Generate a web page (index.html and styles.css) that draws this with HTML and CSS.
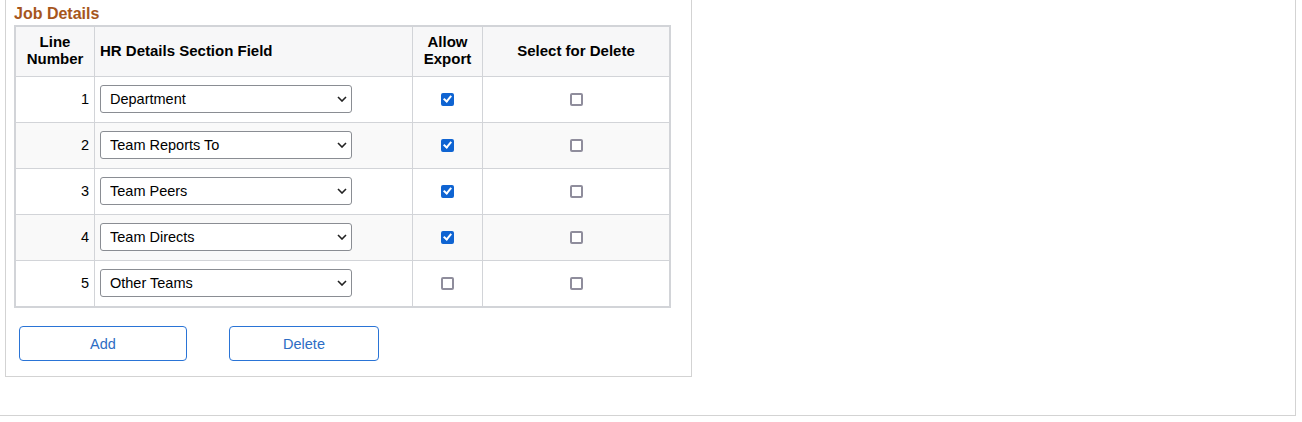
FILE: index.html
```html
<!DOCTYPE html>
<html>
<head>
<meta charset="utf-8">
<link rel="stylesheet" href="styles.css">
</head>
<body>
<div class="page">
  <div class="group">
    <div class="group-title">Job Details</div>
    <table class="grid">
      <thead>
        <tr>
          <th class="c-line">Line<br>Number</th>
          <th class="c-field">HR Details Section Field</th>
          <th class="c-export">Allow<br>Export</th>
          <th class="c-del">Select for Delete</th>
        </tr>
      </thead>
      <tbody>
        <tr>
          <td class="num">1</td>
          <td class="fld"><div class="sel"><select><option>Department</option></select><svg class="chev" width="10" height="6" viewBox="0 0 10 6"><path d="M1 1 L5 5 L9 1" fill="none" stroke="#222" stroke-width="1.6"/></svg></div></td>
          <td class="cb"><input type="checkbox" checked></td>
          <td class="cb"><input type="checkbox"></td>
        </tr>
        <tr class="alt">
          <td class="num">2</td>
          <td class="fld"><div class="sel"><select><option>Team Reports To</option></select><svg class="chev" width="10" height="6" viewBox="0 0 10 6"><path d="M1 1 L5 5 L9 1" fill="none" stroke="#222" stroke-width="1.6"/></svg></div></td>
          <td class="cb"><input type="checkbox" checked></td>
          <td class="cb"><input type="checkbox"></td>
        </tr>
        <tr>
          <td class="num">3</td>
          <td class="fld"><div class="sel"><select><option>Team Peers</option></select><svg class="chev" width="10" height="6" viewBox="0 0 10 6"><path d="M1 1 L5 5 L9 1" fill="none" stroke="#222" stroke-width="1.6"/></svg></div></td>
          <td class="cb"><input type="checkbox" checked></td>
          <td class="cb"><input type="checkbox"></td>
        </tr>
        <tr class="alt">
          <td class="num">4</td>
          <td class="fld"><div class="sel"><select><option>Team Directs</option></select><svg class="chev" width="10" height="6" viewBox="0 0 10 6"><path d="M1 1 L5 5 L9 1" fill="none" stroke="#222" stroke-width="1.6"/></svg></div></td>
          <td class="cb"><input type="checkbox" checked></td>
          <td class="cb"><input type="checkbox"></td>
        </tr>
        <tr>
          <td class="num">5</td>
          <td class="fld"><div class="sel"><select><option>Other Teams</option></select><svg class="chev" width="10" height="6" viewBox="0 0 10 6"><path d="M1 1 L5 5 L9 1" fill="none" stroke="#222" stroke-width="1.6"/></svg></div></td>
          <td class="cb"><input type="checkbox"></td>
          <td class="cb"><input type="checkbox"></td>
        </tr>
      </tbody>
    </table>
    <div class="actions">
      <button class="btn btn-add">Add</button>
      <button class="btn btn-del">Delete</button>
    </div>
  </div>
</div>
</body>
</html>
```

FILE: styles.css
```css
html, body {
  margin: 0;
  padding: 0;
  background: #fff;
}
body {
  font-family: Arial, "Liberation Sans", sans-serif;
  font-size: 14.5px;
  color: #000;
}
.page {
  width: 1295px;
  height: 415px;
  border-right: 1px solid #d3d3d3;
  border-bottom: 1px solid #d3d3d3;
}
.group {
  margin-left: 5px;
  width: 687px;
  height: 377px;
  border-left: 1px solid #d3d3d3;
  border-right: 1px solid #d3d3d3;
  border-bottom: 1px solid #d3d3d3;
  padding: 0 8px;
  box-sizing: border-box;
}
.group-title {
  padding-top: 4px;
  line-height: 20px;
  height: 20px;
  margin-bottom: 1px;
  font-size: 16px;
  font-weight: bold;
  color: #a6561c;
}
.grid {
  border-collapse: collapse;
  border: 2px solid #d2d4d8;
  width: 657px;
}
.grid th, .grid td {
  border: 1px solid #d2d4d8;
  padding: 0;
}
.grid th {
  background: #f7f7f8;
  font-size: 15px;
  font-weight: bold;
  line-height: 17px;
  height: 46px;
  padding-bottom: 3px;
  text-align: center;
}
.grid th.c-field {
  text-align: left;
  padding-left: 5px;
}
.c-line { width: 78px; }
.c-field { width: 312px; }
.c-export { width: 69px; }
.grid tbody td {
  height: 44px;
  padding-bottom: 1px;
  background: #fff;
}
.grid tbody tr.alt td {
  background: #f9f9f9;
}
.grid td.num {
  text-align: right;
  padding-right: 5px;
}
.grid td.fld {
  padding-left: 5px;
}
.sel {
  position: relative;
  width: 252px;
  height: 28px;
}
.sel select {
  appearance: none;
  -webkit-appearance: none;
  width: 252px;
  height: 28px;
  box-sizing: border-box;
  border: 1px solid #8a8d93;
  border-radius: 3px;
  background: #fff;
  font-family: Arial, "Liberation Sans", sans-serif;
  font-size: 14.5px;
  color: #000;
  padding: 0 0 0 9px;
  margin: 0;
  display: block;
}
.chev {
  position: absolute;
  right: 5px;
  top: 11px;
  pointer-events: none;
}
.grid td.cb {
  text-align: center;
  height: 42px;
  padding-bottom: 3px;
}
.cb input {
  appearance: none;
  -webkit-appearance: none;
  width: 13px;
  height: 13px;
  margin: 0;
  box-sizing: border-box;
  border: 2px solid #8f8d9c;
  border-radius: 2px;
  background: #fff;
  vertical-align: middle;
  position: relative;
  display: inline-block;
}
.cb input:checked {
  background: #0f64d2;
  border-color: #0f64d2;
}
.cb input:checked::after {
  content: "";
  position: absolute;
  left: 2px;
  top: -1px;
  width: 3px;
  height: 6px;
  border: solid #fff;
  border-width: 0 2px 2px 0;
  transform: rotate(40deg);
}
.actions {
  display: flex;
  gap: 42px;
  padding: 18px 0 0 5px;
}
.btn {
  height: 35px;
  box-sizing: border-box;
  border: 1px solid #2a74d6;
  border-radius: 4px;
  background: #fff;
  color: #2d6dc4;
  font-family: Arial, "Liberation Sans", sans-serif;
  font-size: 14.5px;
  padding: 0;
  margin: 0;
}
.btn-add { width: 168px; }
.btn-del { width: 150px; }
```
